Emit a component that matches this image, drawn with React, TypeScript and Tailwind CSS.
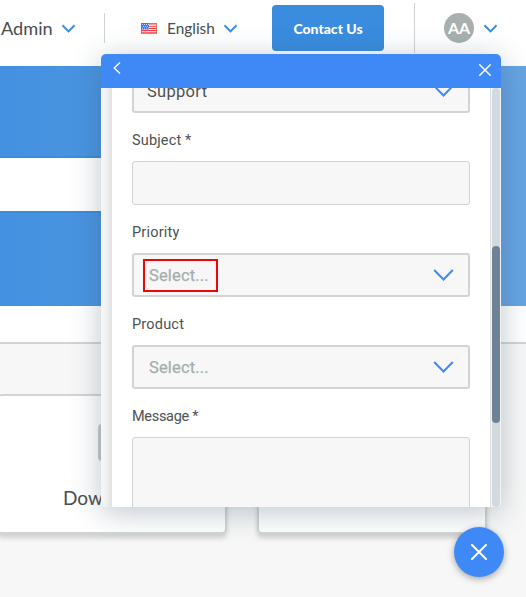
import React from "react";

function Chevron({ className, width = 2 }: { className: string; width?: number }) {
  return (
    <svg viewBox="0 0 20 12" className={className} fill="none" stroke="currentColor" strokeWidth={width}>
      <path d="M0.7 1 L10 10.5 L19.3 1" />
    </svg>
  );
}

function Flag() {
  return (
    <svg viewBox="0 0 16 11" className="ml-[36px] h-[11px] w-4">
      <rect width="16" height="11" fill="#fff" />
      <path d="M0 1h16M0 3.2h16M0 5.4h16M0 7.6h16M0 9.8h16" stroke="#ff3b3b" strokeWidth="1.1" />
      <rect width="8" height="6.5" fill="#3b6ff0" />
      <path d="M1 1.5h7M2 3.3h6M1 5h7" stroke="#fff" strokeWidth=".8" strokeDasharray="1 1" />
      <rect x=".5" y=".5" width="15" height="10" fill="none" stroke="#b06540" strokeOpacity=".65" />
    </svg>
  );
}

function Header() {
  return (
    <header className="flex h-[66px] items-start bg-white text-[#494e50]">
      <div className="flex h-14 items-center">
        <span className="w-[62px] pl-px pt-[2px] text-[18.2px]">Admin</span>
        <Chevron className="h-[9px] w-[13px] text-[#398cde]" width={3} />
        <span className="ml-[29px] h-[30px] w-px bg-[#cfd3d3]" />
        <Flag />
        <span className="ml-[10px] w-[57px] pt-[2px] text-[15.4px]">English</span>
        <Chevron className="h-[9px] w-[13px] text-[#398cde]" width={3} />
      </div>
      <div className="ml-[35px] mt-[5px] flex h-[46px] w-28 items-center justify-center rounded bg-[#398cde] text-[14px] font-black text-white">
        Contact Us
      </div>
      <div className="ml-[30px] mt-[3px] h-[50px] w-px bg-[#cfd3d3]" />
      <div className="ml-[29px] mt-[13px] flex h-[30px] w-[30px] items-center justify-center rounded-full bg-[#a7b0af] text-[16px] font-bold text-white">
        AA
      </div>
      <Chevron className="ml-[10px] mt-[24px] h-[9px] w-[13px] text-[#398cde]" width={3} />
    </header>
  );
}

function Card({ children }: { children?: React.ReactNode }) {
  return (
    <div className="h-[140px] w-[230px] shrink-0 rounded-[5px] border-2 border-[#d0d5d4] bg-white shadow-[0_4px_5px_rgba(0,0,0,0.16)]">
      {children}
    </div>
  );
}

function Page() {
  return (
    <div className="flex h-full flex-col font-[Lato,sans-serif]">
      <Header />
      <div className="h-[240px] bg-linear-to-r from-[#4391e0] to-[#66a4e3] pt-[90px]">
        <div className="h-[57px] w-[480px] border-y-2 border-[#398cde] bg-white" />
      </div>
      <div className="h-[38px] border-b-2 border-[#d0d5d4] bg-white" />
      <div className="flex grow gap-[30px] bg-[#f7f7f7] pt-[50px]">
        <div className="-ml-[3px]">
          <Card>
            <div className="ml-[99px] mt-[28px] h-[37px] w-[36px] rounded bg-[#c4cccd]" />
            <div className="ml-[64px] mt-[23px] text-[19px] leading-7 text-[#494e50]">Downloads</div>
          </Card>
        </div>
        <Card />
      </div>
    </div>
  );
}

function Label({ text, spacing }: { text: string; spacing: string }) {
  return <div className={`h-12 pt-[18px] text-[14.5px] leading-5 text-[#4d5151] ${spacing}`}>{text}</div>;
}

function Select({ value, chosen, marked }: { value: string; chosen?: boolean; marked?: boolean }) {
  return (
    <div className="flex h-11 items-center justify-between rounded-[3px] border-2 border-[#d0d5d4] bg-[#f7f7f7] pl-[9px] pr-[14px]">
      <span
        className={`flex h-[33px] w-[75px] items-center border-2 pl-1 pt-[2px] text-[16.5px] ${
          chosen ? "-ml-[2px] text-[#4d5151] tracking-[0.3px]" : "text-[#a5aead] tracking-[0.15px] [-webkit-text-stroke:0.25px_#a5aead]"
        } ${marked ? "border-[#f00505]" : "border-transparent"}`}
      >
        {value}
      </span>
      <Chevron className="-mt-px h-3 w-[21px] text-[#3e89f5]" />
    </div>
  );
}

function Cross({ className, width }: { className: string; width: number }) {
  return (
    <svg viewBox="0 0 16 16" className={className} stroke="currentColor" strokeWidth={width} fill="none" strokeLinecap="round">
      <path d="M1 1l14 14M15 1L1 15" />
    </svg>
  );
}

function Widget() {
  return (
    <section className="absolute left-[101px] top-[54px] flex h-[453px] w-[400px] flex-col rounded-[5px] font-[Roboto,sans-serif] shadow-[0_5px_30px_rgba(50,75,95,0.32)]">
      <div className="flex h-[34px] shrink-0 justify-between rounded-t-[5px] bg-[#3e89f5] pl-3 pr-[10px] text-white">
        <svg viewBox="0 0 8 12" className="mt-2 h-3 w-2" fill="none" stroke="currentColor" strokeWidth="1.4">
          <path d="M7 .5L1.2 6L7 11.5" />
        </svg>
        <Cross className="mt-[10px] h-3 w-3" width={1.9} />
      </div>
      <div className="flex min-h-0 grow overflow-hidden rounded-b-[4px]">
        <div className="w-[11px] bg-linear-to-r from-[#f7f7f7] via-[#f1f1f1] to-[#e1e1e1]" />
        <div className="w-[378px] overflow-hidden bg-white px-5">
          <div className="-mt-[19px]">
            <Select value="Support" chosen />
            <Label text="Subject *" spacing="tracking-[0.15px]" />
            <div className="h-11 rounded-[3px] border border-[#d0d5d4] bg-[#f7f7f7]" />
            <Label text="Priority" spacing="tracking-[0.2px]" />
            <Select value="Select..." marked />
            <Label text="Product" spacing="tracking-[0.2px]" />
            <Select value="Select..." />
            <Label text="Message *" spacing="tracking-[-0.3px]" />
            <div className="h-[100px] rounded-[3px] border border-[#d0d5d4] bg-[#f7f7f7]" />
          </div>
        </div>
        <div className="w-[11px] border-l border-[#dfdfdf] bg-[#f5f5f5] pl-px">
          <div className="h-full w-2 rounded bg-[#d1d9e1] pt-[158px]">
            <div className="h-[177px] rounded bg-[#6d8395]" />
          </div>
        </div>
      </div>
    </section>
  );
}

export default function App() {
  return (
    <main className="relative h-[597px] w-[526px] overflow-hidden bg-[#f7f7f7]">
      <Page />
      <Widget />
      <button className="absolute left-[454px] top-[527px] flex h-[50px] w-[50px] items-center justify-center rounded-full bg-[#3e89f5] text-white shadow-[0_2px_7px_rgba(0,0,0,0.35)]">
        <Cross className="h-4 w-4" width={2} />
      </button>
    </main>
  );
}
